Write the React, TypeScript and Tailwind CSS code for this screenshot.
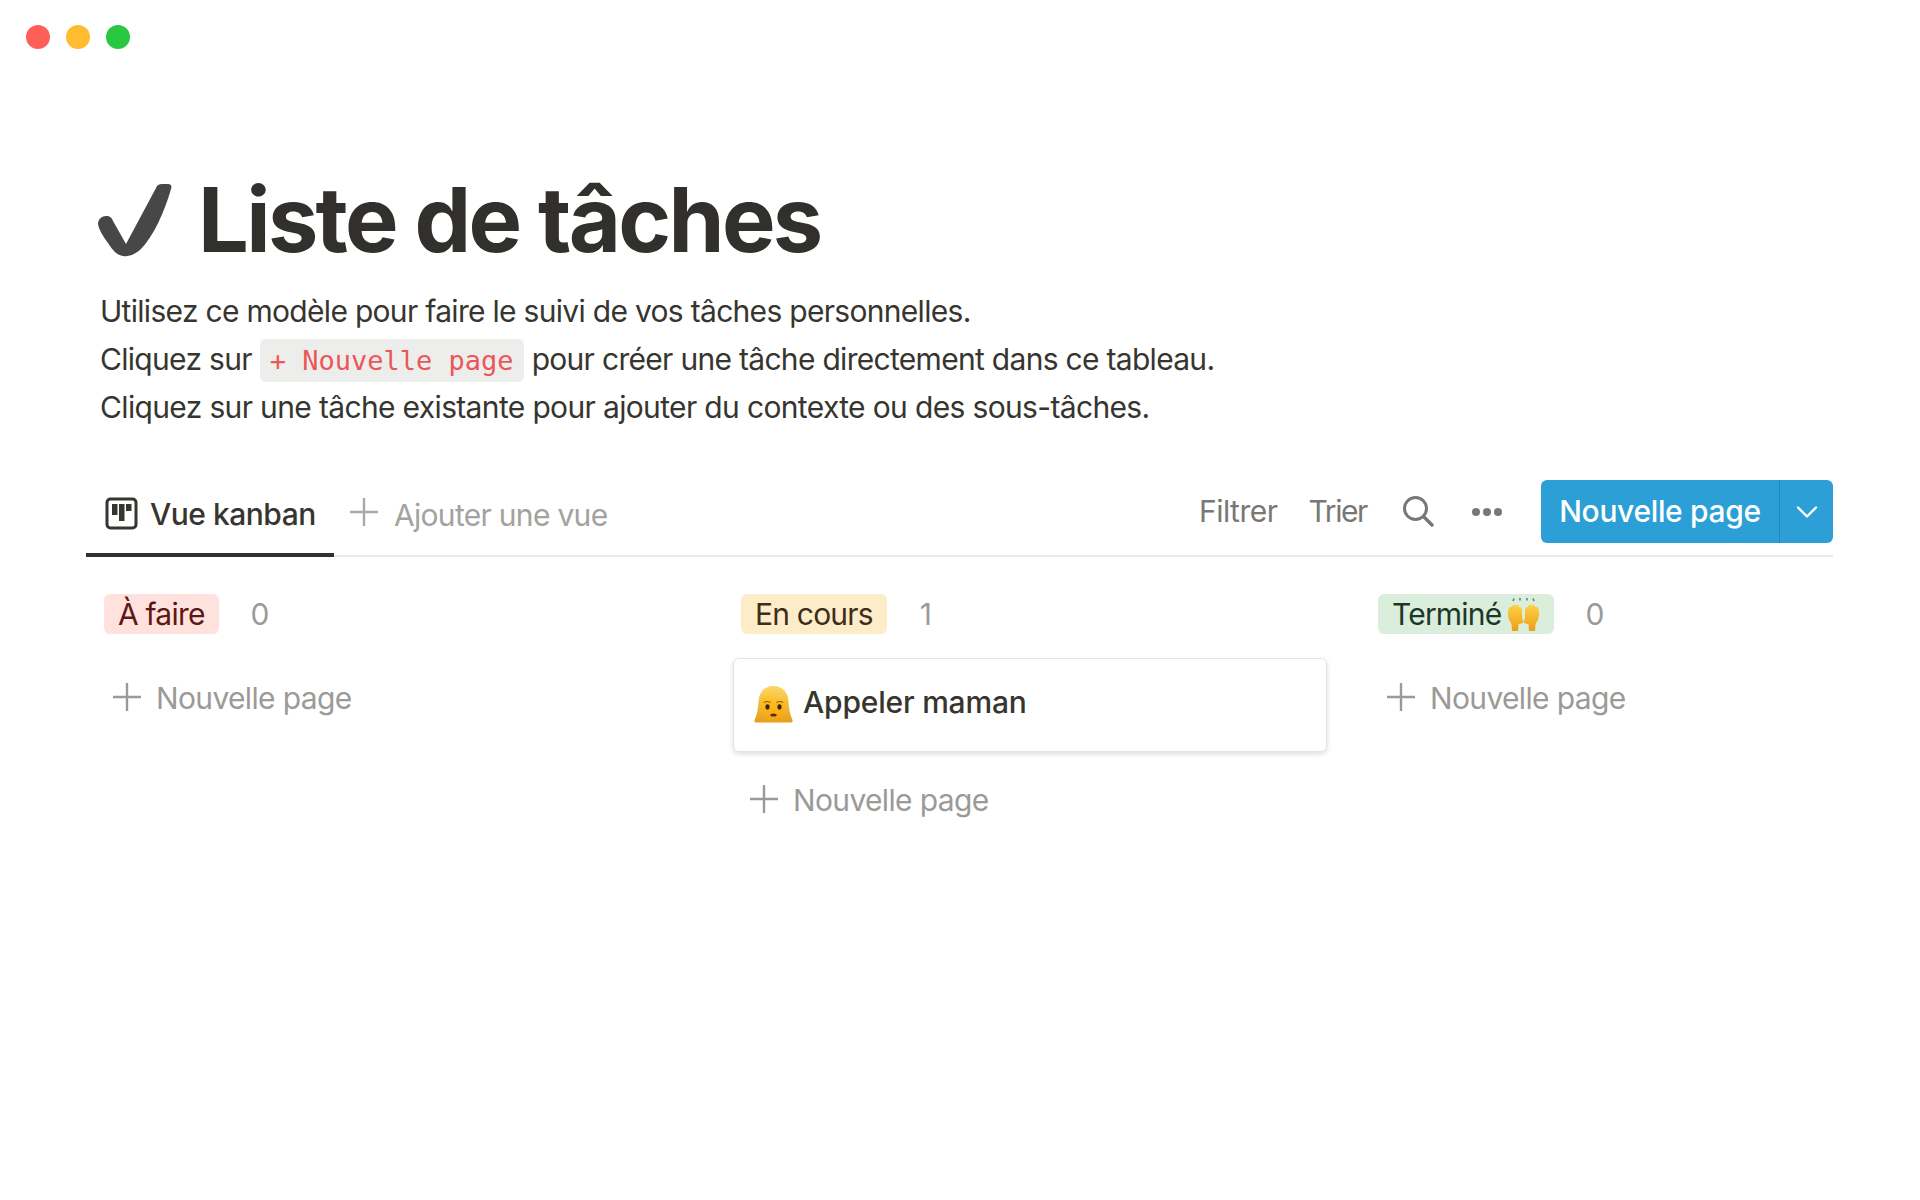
import { ChevronDown } from 'lucide-react';

const INK = 'text-[#37352f]';

function CheckMark() {
  return (
    <svg width="75" height="75" viewBox="0 0 75 75" className="shrink-0">
      <path
        d="M1 41 C1 36 5 33 9 33 C13 33 15 35 16 38 L29 61 L59 5 C60 2 62 1 65 1 L71 1 C74 1 75 3 74 6 C67 30 57 52 44 66 C39 71 32 74 26 73 C20 72 16 68 11 60 C6 53 2 47 1 41 Z"
        fill="#474747"
      />
    </svg>
  );
}

function KanbanIcon() {
  return (
    <svg width="33" height="33" viewBox="0 0 33 33" className="shrink-0 -mt-[3px]">
      <rect x="2" y="2" width="29" height="29" rx="3.5" fill="none" stroke="#37352f" strokeWidth="3" />
      <rect x="7" y="7" width="5.500" height="11" fill="#37352f" />
      <rect x="14" y="7" width="5.500" height="17" fill="#37352f" />
      <rect x="21" y="7" width="5.500" height="7" fill="#37352f" />
    </svg>
  );
}

function PlusGlyph({ color = '#9b9a97', className = '' }: { color?: string; className?: string }) {
  return (
    <svg width="28" height="28" viewBox="0 0 28 28" className={`shrink-0 ${className}`}>
      <path d="M14 0 V28 M0 14 H28" stroke={color} strokeWidth="2.4" fill="none" />
    </svg>
  );
}

function SearchGlyph() {
  return (
    <svg width="31" height="31" viewBox="0 0 31 31" className="shrink-0">
      <circle cx="12.5" cy="12.5" r="11" fill="none" stroke="#787774" strokeWidth="3" />
      <path d="M20.5 20.5 L29 29" stroke="#787774" strokeWidth="3.4" strokeLinecap="round" />
    </svg>
  );
}

function WomanEmoji() {
  return (
    <svg width="39" height="37" viewBox="0 0 39 37" className="shrink-0 -mt-[2px]">
      <defs>
        <linearGradient id="hair" x1="0" y1="0" x2="0" y2="1">
          <stop offset="0" stopColor="#fcd75e" />
          <stop offset="1" stopColor="#e5a01c" />
        </linearGradient>
        <linearGradient id="skin" x1="0" y1="0" x2="0" y2="1">
          <stop offset="0" stopColor="#ffc928" />
          <stop offset="1" stopColor="#f4a312" />
        </linearGradient>
      </defs>
      <path d="M19.500 0 C10 0 5 7 4.500 15 C4 23 3 29 0.500 34 C0 36 1 36.500 3 36.500 L36 36.500 C38 36.500 39 36 38.500 34 C36 29 35 23 34.500 15 C34 7 29 0 19.500 0 Z" fill="url(#hair)" />
      <path d="M6.500 20 C6.500 14 10 11 14 8 C18 12 26 14 32.500 15 C34 26 28 35 19.500 35 C11.500 35 6.500 28 6.500 20 Z" fill="url(#skin)" />
      <ellipse cx="13.500" cy="21" rx="2.100" ry="2.700" fill="#3a250c" />
      <ellipse cx="25.500" cy="21" rx="2.100" ry="2.700" fill="#3a250c" />
      <path d="M10 16.500 Q13 14.500 16.500 16.500 M22.500 16.500 Q26 14.500 29 16.500" stroke="#9a5f0c" strokeWidth="1.200" fill="none" />
      <ellipse cx="19.500" cy="29" rx="3.200" ry="1.600" fill="#5f2c0c" />
    </svg>
  );
}

function HandsEmoji() {
  return (
    <svg width="33" height="33" viewBox="0 0 33 33" className="shrink-0">
      <defs>
        <linearGradient id="hand" x1="0" y1="0" x2="0" y2="1">
          <stop offset="0" stopColor="#ffd045" />
          <stop offset="1" stopColor="#ec9f16" />
        </linearGradient>
      </defs>
      <path d="M6 3 L7 0.500 M13 2.500 L13 0 M20 2.500 L20 0 M27 3 L26 0.500" stroke="#5f6d5c" strokeWidth="1.400" />
      <path d="M1 15 C1 11 2.500 8 4 9 L5 9 C5.500 6 8 6 8.500 8 C9.500 6 12 6.500 12 9 C13.500 8.500 15 10 15 12 L15 18 C15 21 16 22 16.500 24 C15 26 13 26 11.500 26 L11 33 L5 33 L4.500 26 C2 23 1 19 1 15 Z" fill="url(#hand)" />
      <path d="M32 15 C32 11 30.500 8 29 9 L28 9 C27.500 6 25 6 24.500 8 C23.500 6 21 6.500 21 9 C19.500 8.500 18 10 18 12 L18 18 C18 21 17 22 16.500 24 C18 26 20 26 21.500 26 L22 33 L28 33 L28.500 26 C31 23 32 19 32 15 Z" fill="url(#hand)" />
    </svg>
  );
}

function AddRow({ className = '' }: { className?: string }) {
  return (
    <div className={`flex items-center gap-[15px] text-[#9b9a97] text-[30px] tracking-[-0.65px] h-[40px] pl-[17px] ${className}`}>
      <PlusGlyph />
      <span className="pt-[2px]">Nouvelle page</span>
    </div>
  );
}

function Tag({ bg, text, children }: { bg: string; text: string; children: React.ReactNode }) {
  return (
    <span className={`flex items-center gap-[6px] h-[40px] px-[14px] rounded-[6px] text-[30px] tracking-[-0.8px] ${bg} ${text}`}>
      {children}
    </span>
  );
}

export default function App() {
  return (
    <div className={`w-[1920px] h-[1200px] bg-white overflow-hidden font-['Inter',sans-serif] ${INK}`}>
      {/* Window buttons */}
      <div className="flex gap-[16px] pl-[26px] pt-[25px]">
        <span className="w-[24px] h-[24px] rounded-full bg-[#ff5f57]" />
        <span className="w-[24px] h-[24px] rounded-full bg-[#febc2e]" />
        <span className="w-[24px] h-[24px] rounded-full bg-[#28c840]" />
      </div>

      <div className="pl-[86px] pr-[87px]">
        {/* Title */}
        <div className="mt-[123px] pl-[11px] flex items-center gap-[26px] h-[96px]">
          <CheckMark />
          <h1 className="text-[90px] leading-[96px] font-bold tracking-[-2.7px] text-[#32302c] whitespace-nowrap">Liste de tâches</h1>
        </div>

        {/* Intro */}
        <div className="mt-[19px] pl-[14px] text-[30px] leading-[48px] tracking-[-0.7px]">
          <p>Utilisez ce modèle pour faire le suivi de vos tâches personnelles.</p>
          <p className="flex items-center">
            Cliquez sur
            <code className="mx-[8px] mt-[2px] h-[43px] px-[10px] rounded-[6px] bg-[#ededec] text-[#eb5757] text-[27px] leading-[43px] tracking-normal font-['DejaVu_Sans_Mono',monospace]">
              + Nouvelle page
            </code>
            pour créer une tâche directement dans ce tableau.
          </p>
          <p className="tracking-[-0.65px]">Cliquez sur une tâche existante pour ajouter du contexte ou des sous-tâches.</p>
        </div>

        {/* View tabs and toolbar */}
        <div className="mt-[49px] h-[77px] flex items-start justify-between border-b-2 border-[#e9e9e7]">
          <div className="flex h-[77px]">
            <div className="flex items-center gap-[12px] w-[248px] pl-[19px] h-[77px] pb-[4px] border-b-4 border-[#32302c] text-[30px] font-medium tracking-[-0.5px]">
              <KanbanIcon />
              <span>Vue kanban</span>
            </div>
            <div className="flex items-center gap-[16px] pl-[16px] pb-[6px] text-[30px] tracking-[-0.7px] text-[#a3a29e]">
              <PlusGlyph color="#a9a8a5" className="-mt-[7px]" />
              <span>Ajouter une vue</span>
            </div>
          </div>
          <div className="flex items-center h-[63px] text-[30px] tracking-[-0.7px] text-[#787774]">
            <span className="tracking-[-0.5px]">Filtrer</span>
            <span className="ml-[31px] tracking-[-1.4px]">Trier</span>
            <span className="ml-[36px]"><SearchGlyph /></span>
            <div className="ml-[38px] flex gap-[3px]">
              <span className="w-[8px] h-[8px] rounded-full bg-[#787774]" />
              <span className="w-[8px] h-[8px] rounded-full bg-[#787774]" />
              <span className="w-[8px] h-[8px] rounded-full bg-[#787774]" />
            </div>
            <div className="ml-[39px] flex h-[63px] w-[292px] rounded-[6px] bg-[#2c9fd6] text-white">
              <span className="flex items-center justify-center w-[239px] font-medium tracking-[-0.35px] border-r border-[#2788b8]">Nouvelle page</span>
              <span className="flex-1 flex items-center justify-center">
                <ChevronDown size={36} strokeWidth={1.6} />
              </span>
            </div>
          </div>
        </div>

        {/* Board */}
        <div className="grid grid-cols-[594px_594px_1fr] gap-x-[43px] pl-[10px] pt-[37px]">
          <div>
            <div className="flex items-center gap-[32px] pl-[8px] h-[40px]">
              <Tag bg="bg-[#ffe2dd]" text="text-[#5d1715]">À faire</Tag>
              <span className="text-[30px] text-[#9b9a97]">0</span>
            </div>
            <AddRow className="mt-[43px]" />
          </div>

          <div>
            <div className="flex items-center gap-[33px] pl-[8px] h-[40px]">
              <Tag bg="bg-[#fdecc8]" text="text-[#402c1b]">En cours</Tag>
              <span className="text-[30px] text-[#9b9a97]">1</span>
            </div>
            <div className="mt-[24px] h-[94px] flex items-center gap-[10px] pl-[20px] rounded-[6px] bg-white border border-[#e3e3e1] shadow-[0_2px_5px_rgba(15,15,15,0.14)]">
              <WomanEmoji />
              <span className="text-[30px] font-medium tracking-[-0.2px] pb-[5px]">Appeler maman</span>
            </div>
            <AddRow className="mt-[27px]" />
          </div>

          <div>
            <div className="flex items-center gap-[31px] pl-[8px] h-[40px]">
              <Tag bg="bg-[#dbeddb]" text="text-[#1c3829]">Terminé <HandsEmoji /></Tag>
              <span className="text-[30px] text-[#9b9a97]">0</span>
            </div>
            <AddRow className="mt-[43px]" />
          </div>
        </div>
      </div>
    </div>
  );
}
